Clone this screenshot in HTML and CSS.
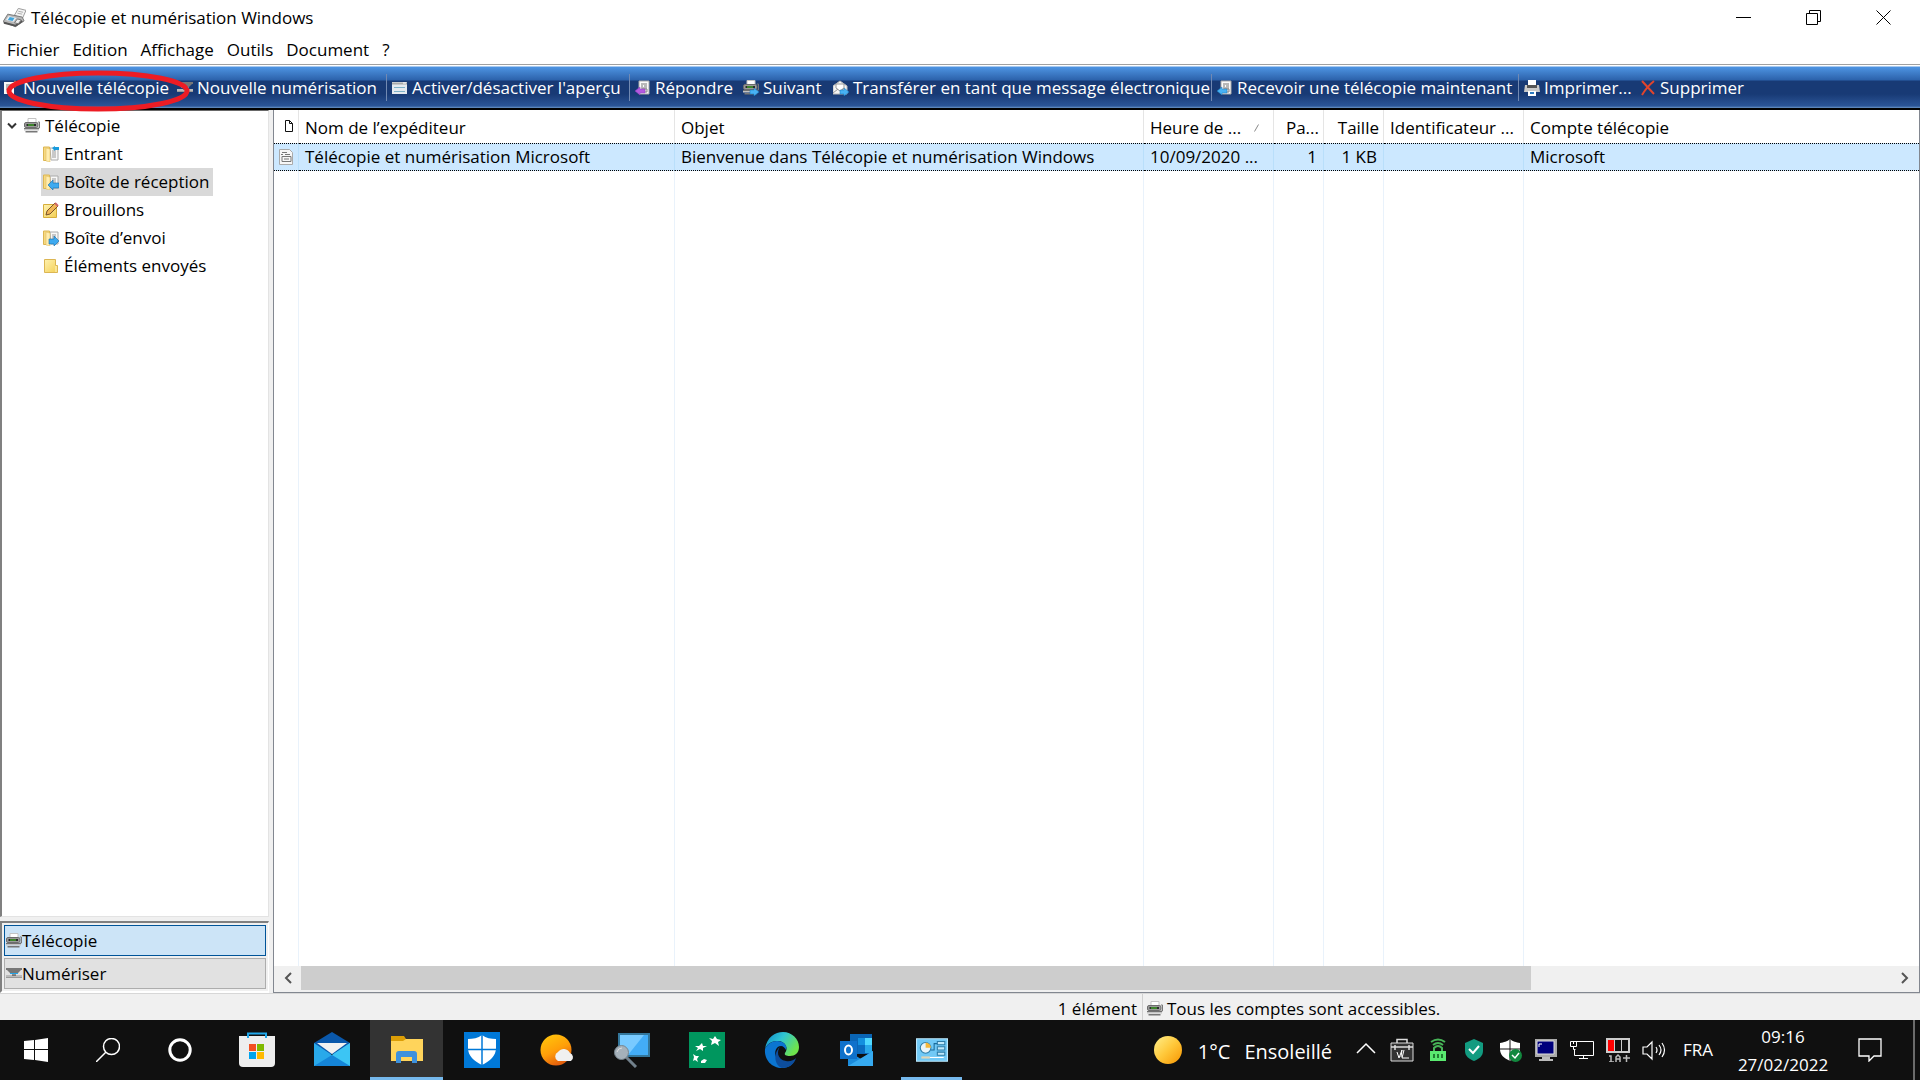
FILE: index.html
```html
<!DOCTYPE html>
<html lang="fr">
<head>
<meta charset="utf-8">
<title>Télécopie et numérisation Windows</title>
<link rel="stylesheet" href="styles.css">
</head>
<body>
<svg class="defs" aria-hidden="true">
  <defs>
    <linearGradient id="folderFill" x1="0" y1="0" x2="1" y2="1"><stop offset="0" stop-color="#fff2b0"/><stop offset="1" stop-color="#f3cf55"/></linearGradient>
    <linearGradient id="sunFill" x1="0" y1="0" x2="1" y2="1"><stop offset="0" stop-color="#fff08c"/><stop offset=".5" stop-color="#ffc83a"/><stop offset="1" stop-color="#f79400"/></linearGradient>
    <symbol id="fax" viewBox="0 0 16 16">
      <path d="M4 .5h8v5H4z" fill="#fff" stroke="#c4c4c4"/>
      <path d="M14 4h1.500v6H14" fill="none" stroke="#777"/>
      <rect x=".5" y="4.500" width="13.500" height="5" rx="1.500" fill="#9a9a9a" stroke="#6c6c6c"/>
      <path d="M2.500 7h9.500" stroke="#2c2c2c" stroke-width="2"/><path d="M4 7h6" stroke="#4ede2c"/>
      <path d="M0 10h15v2.500H0z" fill="#c3c3c3"/><path d="M0 10.500h15" stroke="#707070"/>
      <path d="M1.500 13h12v1.500H1.500z" fill="#777"/>
    </symbol>
    <symbol id="scanner" viewBox="0 0 16 16">
      <path d="M0 3h16" stroke="#777" stroke-width="2"/><path d="M1 4h14l-3 3H4z" fill="#777"/>
      <path d="M4 7.500h8" stroke="#24a5e8"/><path d="M0 9h16v3H0z" fill="#999"/><path d="M0 10h16" stroke="#ddd"/><path d="M6 9h4" stroke="#333"/>
    </symbol>
    <symbol id="folder" viewBox="0 0 16 16">
      <path d="M7 2h8v12H8z" fill="#f8f8f8" stroke="#aaa"/><path d="M9 5h4M9 7h4M9 9h4M9 11h4" stroke="#999"/>
      <path d="M.5 1h6v13.500h-6z" fill="#f6d983" stroke="#dcb653"/><path d="M3 2l4 1v13l-4-1z" fill="#ffedaf" stroke="#dcb653" stroke-width=".5"/>
    </symbol>
    <symbol id="page" viewBox="0 0 16 16">
      <path d="M4 1h10v13H4z" fill="#fafafa" stroke="#aaa"/><path d="M6 4h6M6 6h2M9 6h3M6 8h6" stroke="#777"/><path d="M7 9h5v3H7z" fill="#ddd" stroke="#888"/>
    </symbol>
    <symbol id="shield" viewBox="0 0 24 24"><path d="M12 1c3 3 6 3 10 4v6c0 6-4 9-10 12C6 20 2 17 2 11V5c4-1 7-1 10-4z"/></symbol>
  </defs>
</svg>

<div class="window">
  <header class="titlebar">
    <svg class="app-icon" viewBox="0 0 24 20"><path d="M12 7l4-7 8 2-4 9z" fill="#f4f4f4" stroke="#999"/><path d="M16 3l5 1M15 5l5 1" stroke="#aaa"/><path d="M0 14L5 6l15 3 2 4-9 6z" fill="#b9b9b9" stroke="#777"/><path d="M6 8l8 2-3 4-8-2z" fill="#e9eef2"/><path d="M7 9l5 1-2 3-5-1z" fill="#42a5dc"/><path d="M1 15l12 3 7-5" fill="none" stroke="#555" stroke-width="2"/><path d="M15 11l4 1-3 4-4-1z" fill="#eee" stroke="#777"/></svg>
    <h1 class="title">Télécopie et numérisation Windows</h1>
    <div class="caption-buttons">
      <button class="caption" aria-label="Réduire"><svg viewBox="0 0 16 16"><path d="M0 7.500h15" /></svg></button>
      <button class="caption" aria-label="Restaurer"><svg viewBox="0 0 16 16"><path d="M.5 3.500h11v11H.5zM3.500 3.500v-3h11v11h-3" /></svg></button>
      <button class="caption" aria-label="Fermer"><svg viewBox="0 0 16 16"><path d="M.5.5l14 14M14.500.5l-14 14" /></svg></button>
    </div>
  </header>

  <nav class="menubar" aria-label="Menu">
    <button>Fichier</button><button>Edition</button><button>Affichage</button><button>Outils</button><button>Document</button><button>?</button>
  </nav>

  <div class="toolbar" role="toolbar">
    <button><svg class="icon" viewBox="0 0 16 16"><path d="M1 2h10v12H1z" fill="#f8f8f8"/><path d="M3 5h5M3 7h5M3 9h2" stroke="#777"/><path d="M12 0l1 3 3 1-3 1-1 3-1-3-3-1 3-1z" fill="#ffc34a"/></svg>Nouvelle télécopie</button>
    <button><svg class="icon"><use href="#scanner"/></svg>Nouvelle numérisation</button>
    <button class="divided"><svg class="icon" viewBox="0 0 16 16"><path d="M0 2h15v12H0z" fill="#e4eaf0"/><path d="M0 3.500h15" stroke="#aaa" stroke-width="2"/><path d="M2 7.500h11M2 11.500h11" stroke="#7db1c8"/><path d="M11 3h3" stroke="#fff"/></svg>Activer/désactiver l'aperçu</button>
    <button class="divided"><svg class="icon" viewBox="0 0 16 16"><use href="#page"/><path d="M0 11l5-4v2h5v4H5v2z" fill="#b35adf" stroke="#8f3cc0" stroke-width=".5"/></svg>Répondre</button>
    <button><svg class="icon" viewBox="0 0 16 16"><use href="#fax"/><path d="M16 12l-5-4v2H7v4h4v2z" fill="#48b2f4" stroke="#1676b8" stroke-width=".5"/></svg>Suivant</button>
    <button><svg class="icon" viewBox="0 0 16 16"><path d="M0 6l7-5 7 5v8H0z" fill="#f4f4f4" stroke="#bbb"/><path d="M3 4h8v4l-4 3-4-3z" fill="#fff" stroke="#999"/><path d="M0 13l5-4M14 13L9 9" stroke="#999"/><path d="M16 12l-5-4v2H7v4h4v2z" fill="#48b2f4" stroke="#1676b8" stroke-width=".5"/></svg>Transférer en tant que message électronique</button>
    <button class="divided"><svg class="icon" viewBox="0 0 16 16"><use href="#page"/><path d="M0 11l5-4v2h5v4H5v2z" fill="#48b2f4" stroke="#1676b8" stroke-width=".5"/></svg>Recevoir une télécopie maintenant</button>
    <button class="divided"><svg class="icon" viewBox="0 0 16 16"><path d="M4 0h8v6H4z" fill="#fff"/><path d="M1 5h2v3h10V5h2l1 7H0z" fill="#c9c9c9"/><path d="M3 5h10v3H3z" fill="#555"/><path d="M4 11h8v5H4z" fill="#fff"/><path d="M6 13h4" stroke="#2d7abf" stroke-width="2"/></svg>Imprimer...</button>
    <button><svg class="icon" viewBox="0 0 16 16"><path d="M2 1l12 13M14 1C9 5 5 10 2 15" fill="none" stroke="#e0452d" stroke-width="2"/></svg>Supprimer</button>
    <svg class="annotation" viewBox="0 0 186 44" aria-hidden="true"><ellipse cx="93" cy="22" rx="89" ry="18" fill="none" stroke="#ed1c24" stroke-width="5"/></svg>
  </div>

  <main class="workspace">
    <aside class="sidebar">
      <div class="tree" role="tree">
        <a href="#telecopie" class="node root"><svg class="chevron" viewBox="0 0 10 8"><path d="M1 1.500l4 4 4-4" fill="none" stroke="#333" stroke-width="2"/></svg><svg class="icon"><use href="#fax"/></svg>Télécopie</a>
        <a href="#entrant" class="node"><svg class="icon" viewBox="0 0 16 16"><use href="#folder"/><path d="M9 2l3-2v1h4v3h-4v1z" fill="#199bdd"/></svg>Entrant</a>
        <a href="#reception" class="node selected"><svg class="icon" viewBox="0 0 16 16"><use href="#folder"/><path d="M5 11l5-5v3h6v5h-6v2z" fill="#3eaaf0" stroke="#146ca9" stroke-width=".6"/></svg>Boîte de réception</a>
        <a href="#brouillons" class="node"><svg class="icon" viewBox="0 0 16 16"><path d="M.5 2.500h13v13H.5z" fill="url(#folderFill)" stroke="#d6ae3b"/><path d="M3 13l1-4 8-8 3 3-8 8z" fill="#f1b654" stroke="#765128"/><path d="M12 1l3 3" stroke="#cb6667" stroke-width="2"/></svg>Brouillons</a>
        <a href="#envoi" class="node"><svg class="icon" viewBox="0 0 16 16"><use href="#folder"/><path d="M16 11l-5-5v3H6v5h5v2z" fill="#3eaaf0" stroke="#146ca9" stroke-width=".6"/></svg>Boîte d’envoi</a>
        <a href="#envoyes" class="node"><svg class="icon" viewBox="0 0 16 16"><path d="M1.500 1.500h11v6h2v7h-13z" fill="url(#folderFill)" stroke="#dcb653"/><path d="M13 8v6" stroke="#fff6c5"/></svg>Éléments envoyés</a>
      </div>
      <div class="modes">
        <button class="mode active"><svg class="icon"><use href="#fax"/></svg>Télécopie</button>
        <button class="mode"><svg class="icon"><use href="#scanner"/></svg>Numériser</button>
      </div>
    </aside>

    <section class="list">
      <table>
        <colgroup><col class="c-icon"><col class="c-name"><col class="c-subject"><col class="c-time"><col class="c-pages"><col class="c-size"><col class="c-id"><col></colgroup>
        <thead>
          <tr><th><svg class="doc" viewBox="0 0 10 13"><path d="M1.500.5h4l3 3v8h-7zM5.500.5v3h3" fill="none" stroke="#111"/></svg></th><th>Nom de l’expéditeur</th><th>Objet</th><th><span class="sorted">Heure de ...<svg class="sort" viewBox="0 0 5 8"><path d="M.5 7.500l4-7" stroke="#888"/></svg></span></th><th class="num">Pa...</th><th class="num">Taille</th><th>Identificateur ...</th><th>Compte télécopie</th></tr>
        </thead>
        <tbody>
          <tr class="selected"><td><svg class="icon" viewBox="0 0 16 16"><path d="M1.500.5h10l3 3v12h-13z" fill="#f7f7f7" stroke="#aaa"/><path d="M4 3.500h5M3 5.500h2M7 5.500h5M4 7.500h9v5H4zM6 10h5" fill="none" stroke="#777"/></svg></td><td>Télécopie et numérisation Microsoft</td><td>Bienvenue dans Télécopie et numérisation Windows</td><td>10/09/2020 ...</td><td class="num">1</td><td class="num">1 KB</td><td></td><td>Microsoft</td></tr>
          <tr class="filler"><td></td><td></td><td></td><td></td><td></td><td></td><td></td><td></td></tr>
        </tbody>
      </table>
      <div class="scrollbar">
        <button aria-label="Défiler à gauche"><svg viewBox="0 0 10 12"><path d="M8 1L3 6l5 5" /></svg></button>
        <div class="track"><div class="thumb"></div></div>
        <button aria-label="Défiler à droite"><svg viewBox="0 0 10 12"><path d="M2 1l5 5-5 5" /></svg></button>
      </div>
    </section>
  </main>

  <footer class="statusbar">
    <span class="count">1 élément</span>
    <span class="accounts"><svg class="icon"><use href="#fax"/></svg>Tous les comptes sont accessibles.</span>
  </footer>
</div>

<div class="taskbar">
  <div class="apps">
    <button aria-label="Démarrer"><svg width="24" height="24" viewBox="0 0 24 24" fill="#fff"><path d="M0 3l10-1v9H0zM11 2l13-2v11H11zM0 12h10v10L0 21zM11 12h13v12l-13-2z"/></svg></button>
    <button aria-label="Rechercher"><svg width="24" height="24" viewBox="0 0 24 24" fill="none" stroke="#fff" stroke-width="1.500"><circle cx="15.500" cy="8.500" r="8"/><path d="M10 14L0 24"/></svg></button>
    <button aria-label="Cortana"><svg width="24" height="24" viewBox="0 0 24 24" fill="none"><circle cx="12" cy="12" r="10.200" stroke="#fff" stroke-width="3"/></svg></button>
    <button class="wide" aria-label="Microsoft Store"><svg width="36" height="36" viewBox="0 0 36 36"><path d="M0 4h36v27q0 4-4 4H4q-4 0-4-4z" fill="#eee"/><path d="M9 6V1.500h18V6" fill="none" stroke="#20a7ea" stroke-width="2"/><path d="M10 12h7v7h-7z" fill="#f25022"/><path d="M18 12h7v7h-7z" fill="#7fba00"/><path d="M10 20h7v7h-7z" fill="#00a4ef"/><path d="M18 20h7v7h-7z" fill="#ffb900"/></svg></button>
    <button class="wide" aria-label="Courrier"><svg width="36" height="36" viewBox="0 0 36 36"><path d="M0 11L18 0l18 11v11H0z" fill="#0a58ab"/><path d="M0 11l18 12 18-12v23H0z" fill="#29a9ea"/><path d="M3 11h30L18 22z" fill="#f1f1f1"/><path d="M36 11L18 23l11 8 7 3z" fill="#3cc5f4"/><path d="M0 34l18-11 18 11z" fill="#1585d8"/></svg></button>
    <button class="wide open current" aria-label="Explorateur de fichiers"><svg width="32" height="28" viewBox="0 0 32 28"><path d="M0 0h13l2 3h17v8H0z" fill="#dc9e06"/><path d="M0 5h12l3-2h17v22H0z" fill="#ffd45b"/><path d="M5 27v-9q0-3 3-3h15q3 0 3 3v9h-5v-6H10v6z" fill="#3d91dd"/></svg></button>
    <button class="wide" aria-label="Sécurité Windows"><svg width="36" height="36" viewBox="0 0 36 36"><path d="M0 0h36v36H0z" fill="#0078d7"/><path d="M18 3c4 3 9 4 14 4v9c0 8-6 13-14 17C10 29 4 24 4 16V7c5 0 10-1 14-4z" fill="#fff"/><path d="M18 2v32M3 17.500h30" stroke="#0078d7" stroke-width="1.500"/></svg></button>
    <button class="wide" aria-label="Météo"><svg width="34" height="34" viewBox="0 0 34 34"><defs><linearGradient id="wx" x1="0" y1="0" x2=".5" y2="1"><stop offset="0" stop-color="#ffcb0c"/><stop offset=".6" stop-color="#ff9e09"/><stop offset="1" stop-color="#e4600d"/></linearGradient></defs><circle cx="16" cy="17" r="15.500" fill="url(#wx)"/><path d="M18 28a5 5 0 010-9 7 7 0 0112 1 4.500 4.500 0 011 8z" fill="#f0f0f0"/></svg></button>
    <button class="wide" aria-label="Recherche à distance"><svg width="36" height="36" viewBox="0 0 36 36"><path d="M4 1h32v24H4z" fill="#33779c"/><path d="M6 3h28v20H6z" fill="#43adf7"/><path d="M6 3h24L14 23H6z" fill="#78caff"/><path d="M12 25l10 10" stroke="#72818c" stroke-width="3"/><circle cx="7.500" cy="20.500" r="7" fill="#a5b1ba" stroke="#77858e"/><path d="M3 20q1-4 5-4" stroke="#ddd" fill="none"/></svg></button>
    <button class="wide" aria-label="BNP Paribas"><svg width="36" height="36" viewBox="0 0 36 36"><path d="M0 0h36v36H0z" fill="#00965e"/><g fill="#fff"><path d="M20 6l4 1 2-3 2 3 4 1-3 2 1 4-4-3-4 2 1-4z"/><path d="M6 14l4 0 3-3 1 3 4 0-4 2 0 3-3-2-4 2 2-3z"/><path d="M4 22l3 2 3 0-2 3 1 3-3-2-2 1 1-4z"/><path d="M12 29l3-2 3 1-2 3-4 0z"/></g></svg></button>
    <button class="wide" aria-label="Microsoft Edge"><svg width="36" height="36" viewBox="0 0 34 36"><defs><linearGradient id="edge" x1="0" y1="0" x2="1" y2=".5"><stop offset="0" stop-color="#0c86ca"/><stop offset=".5" stop-color="#30c6d2"/><stop offset="1" stop-color="#6ee34d"/></linearGradient></defs><path d="M0 17C2 5 10 0 18 0c9 0 16 7 16 15 0 6-4 9-9 9-4 0-6-1-5-3 4-5 0-12-7-12C6 9 2 12 0 17z" fill="url(#edge)"/><path d="M0 17C2 12 7 9 12 9c7 0 11 5 9 9-1-2-3-4-5-4-5 0-7 6-5 11 3 8 12 9 19 3-3 6-8 8-13 8C7 36-1 28 0 17z" fill="#0b75d0"/><path d="M16 14c-5 4-4 14 5 15 4 1 8-1 10-3-2 7-8 10-14 10C10 34 7 21 16 14z" fill="#0d4d9c"/></svg></button>
    <button class="wide" aria-label="Outlook"><svg width="36" height="34" viewBox="0 0 34 34"><path d="M10 1h22v20H10z" fill="#0a65b5"/><path d="M18 5h7v7h-7z" fill="#1390df"/><path d="M25 5h7v8h-7z" fill="#50d9ff"/><path d="M18 12h7v8h-7z" fill="#0a6cc0"/><path d="M25 12h7v8h-7z" fill="#28a8ea"/><path d="M8 18l13 8 12-8v15H8z" fill="#1a8bdc"/><path d="M8 33l25-15v15z" fill="#36aaf0"/><path d="M0 8h17v18H0z" fill="#0f71cb"/><ellipse cx="8.500" cy="17" rx="3.500" ry="4.500" fill="none" stroke="#fff" stroke-width="2"/></svg></button>
    <button class="wide open" aria-label="Télécopie et numérisation"><svg width="32" height="24" viewBox="0 0 30 22"><path d="M.5.5h29v21H.5z" fill="#71c9f6" stroke="#bce7fc"/><circle cx="9" cy="9" r="5" fill="#e9f5fa" stroke="#2d7ca8"/><path d="M9 9V4a5 5 0 015 5z" fill="#f5b73a"/><path d="M14 11h3V5h3" fill="none" stroke="#196b9c"/><path d="M20 3h7v3h-7zM20 8h7v3h-7zM20 13h7v3h-7z" fill="#bfe8fb" stroke="#2d7ca8"/><path d="M5 18h8" stroke="#e2d6b5" stroke-width="2"/><path d="M13 18h13" stroke="#fff"/></svg></button>
  </div>
  <div class="tray">
    <button class="weather"><svg width="28" height="28" viewBox="0 0 28 28"><circle cx="14" cy="14" r="14" fill="url(#sunFill)"/></svg><span>1°C</span><span>Ensoleillé</span></button>
    <div class="tray-icons">
      <svg viewBox="0 0 24 24" fill="none" stroke="#fff" stroke-width="1.500"><path d="M3 15l9-9 9 9"/></svg>
      <svg viewBox="0 0 24 24"><path d="M1 5h22v18H1z" fill="#333" stroke="#ddd"/><path d="M7 5V1.500h10V5M1 9h22M5 7v5M19 7v5" fill="none" stroke="#ddd" stroke-width="1.500"/><path d="M7 14l2 6 3-8-1 7M14 12l-2 8h7" fill="none" stroke="#fff"/></svg>
      <svg viewBox="0 0 24 24"><path d="M4 13h16v10H4z" fill="#5aea70"/><path d="M8 13v-3q4-4 8 0v3M7 7q5-4 10 0M5 4q7-5 14 0" fill="none" stroke="#47b457" stroke-width="2"/><path d="M8 16v4M16 16v4M12 16v4" stroke="#217f31" stroke-width="2"/></svg>
      <svg viewBox="0 0 24 24"><path d="M12 1l9 4v8c0 5-4 8-9 10-5-2-9-5-9-10V5z" fill="#129b80"/><path d="M7 11l4 4 6-7" fill="none" stroke="#fff" stroke-width="2"/></svg>
      <svg viewBox="0 0 24 24"><use href="#shield" fill="#fff"/><path d="M12 0v24M0 11h24" stroke="#101010"/><circle cx="17.500" cy="17.500" r="6.500" fill="#12883e"/><path d="M14 17l3 3 4-5" fill="none" stroke="#fff" stroke-width="1.500"/></svg>
      <svg viewBox="0 0 24 24"><path d="M1 1h22v18H1z" fill="#aaa"/><path d="M3 3h17v13H3z" fill="#00007c" stroke="#ddd"/><path d="M5 6v3M5 6h3" stroke="#fff"/><path d="M8 19h8v2h3v2H5v-2h3z" fill="#bbb"/></svg>
      <svg viewBox="0 0 24 24" fill="none" stroke="#fff"><path d="M6 3.500h17.500v14H4.500v-6M13.500 17.500v3M9 20.500h9M.5 3.500h6v5h-6zM3.500 8.500v3h2M3.500 3v3"/></svg>
      <svg viewBox="0 0 24 24"><path d="M1 1h22v13H1z" fill="none" stroke="#ccc" stroke-width="2"/><path d="M2 2h6v11H2z" fill="#f00"/><path d="M8.500 1v13M15.500 1v13" stroke="#ccc"/><path d="M3 18h2v6M3 24h5M10 24v-5l2-2 2 2v5M10 21h4M17 20h7M20.500 17v7" fill="none" stroke="#bbb" stroke-width="1.500"/></svg>
      <svg viewBox="0 0 24 24" fill="none" stroke="#fff" stroke-width="1.200"><path d="M1 9h4l5-5v17l-5-5H1zM14 9q2 3 0 6M17 7q4 5 0 10M20 5q5 7 0 14"/></svg>
    </div>
    <button class="lang">FRA</button>
    <button class="clock"><time>09:16</time><time>27/02/2022</time></button>
    <button class="notifications" aria-label="Notifications"><svg width="24" height="24" viewBox="0 0 24 24" fill="none" stroke="#fff" stroke-width="1.300"><path d="M1 1h22v17h-7l-5 5v-5H1z"/></svg></button>
    <button class="show-desktop" aria-label="Afficher le bureau"></button>
  </div>
</div>
</body>
</html>
```
FILE: styles.css
```css
* { box-sizing: border-box; }

body {
  margin: 0;
  min-height: 100vh;
  display: flex;
  flex-direction: column;
  background: #f0f0f0;
  color: #000;
  font: 17px/24px "Open Sans", "Noto Sans", sans-serif;
}

button {
  margin: 0;
  padding: 0;
  border: 0;
  background: none;
  color: inherit;
  font: inherit;
  white-space: nowrap;
}

a { color: inherit; text-decoration: none; }
svg { display: block; flex: none; }
.defs { position: absolute; width: 0; height: 0; }
.icon { width: 16px; height: 16px; }

.window { flex: 1; display: flex; flex-direction: column; }

/* Title bar and menu */
.titlebar { display: flex; align-items: center; height: 35px; padding-left: 3px; background: #fff; }
.app-icon { width: 23px; height: 20px; margin-right: 5px; }
.title { flex: 1; margin: 0; font-size: 17px; font-weight: 400; }
.caption-buttons { display: flex; padding-right: 1px; }
.caption { width: 70px; height: 34px; display: flex; align-items: center; justify-content: center; }
.caption svg { width: 16px; height: 16px; fill: none; stroke: #000; }

.menubar { display: flex; gap: 13px; height: 29px; padding: 3px 7px 0; background: #fff; }
.menubar button { height: 24px; }

/* Toolbar */
.toolbar {
  position: relative;
  display: grid;
  grid-template-columns: 174px 209px 243px 114px 90px 378px 307px 122px 1fr;
  align-items: center;
  height: 46px;
  padding: 2px 0 0 3px;
  border-top: 1px solid #a0a0a0;
  border-bottom: 2px solid #000;
  background: linear-gradient(#fff 0 1px, #4e94e2 2px, #2c62ab 15px, #183a75 16px 29px, #2b5597 41px, #6b95c4 43px);
  color: #fff;
}
.toolbar button { display: flex; align-items: center; gap: 4px; height: 27px; }
.toolbar .divided { padding-left: 5px; border-left: 1px solid #7189b2; }
.annotation { position: absolute; left: 5px; top: 4px; width: 186px; height: 44px; }

/* Workspace */
.workspace { flex: 1; display: flex; gap: 4px; }
.sidebar { width: 269px; display: flex; flex-direction: column; gap: 4px; }
.tree {
  flex: 1;
  padding-top: 1px;
  border: 1px solid #e3e3e3;
  border-top-color: #696969;
  border-left: 2px solid #808080;
  background: #fff;
}
.node { display: flex; align-items: center; gap: 5px; width: max-content; height: 28px; margin-left: 39px; padding: 0 4px 0 2px; }
.node.root { margin-left: 3px; }
.node.selected { background: #d9d9d9; }
.chevron { width: 10px; height: 8px; margin-right: 2px; }

.modes {
  display: flex;
  flex-direction: column;
  gap: 2px;
  padding: 2px;
  border: 2px solid #808080;
  border-right-width: 1px;
  border-right-color: #fff;
  border-bottom-color: #fff;
}
.mode { display: flex; align-items: center; height: 31px; padding: 1px 0 0 1px; border: 1px solid #adadad; background: #e1e1e1; }
.mode.active { border-color: #005499; background: #cce4f7; }

/* Fax list */
.list { flex: 1; display: flex; flex-direction: column; border: 1px solid #828790; border-top: 0; background: #fff; }
.list table { width: 100%; table-layout: fixed; border-collapse: separate; border-spacing: 0; height: calc(100vh - 224px); }
.c-icon { width: 25px; }
.c-name { width: 376px; }
.c-subject { width: 469px; }
.c-time { width: 130px; }
.c-pages { width: 50px; }
.c-size { width: 60px; }
.c-id { width: 140px; }
th, td { padding: 0 6px; border-right: 1px solid #e9f2fb; text-align: left; font-weight: 400; white-space: nowrap; overflow: hidden; }
th { height: 33px; padding-top: 2px; border-color: #e5e5e5; }
th:first-child, td:first-child { padding: 0 0 0 4px; }
th:last-child, td:last-child { border-right: 0; }
.num { text-align: right; }
th.num { padding-right: 4px; }
.selected td { height: 28px; border-top: 1px dotted #000; border-bottom: 1px dotted #000; background: #cce8ff; border-right-color: #b9dffb; }
.doc { width: 10px; height: 13px; margin-left: 6px; }
.sorted { display: flex; align-items: center; justify-content: space-between; padding-right: 8px; }
.sort { width: 5px; height: 8px; }

.scrollbar { display: flex; height: 26px; padding: 0 1px 2px; background: #f0f0f0; }
.scrollbar button { width: 26px; display: flex; align-items: center; justify-content: center; }
.scrollbar svg { width: 10px; height: 12px; fill: none; stroke: #555; stroke-width: 2; }
.track { flex: 1; }
.thumb { width: 77.3%; height: 100%; background: #cdcdcd; }

.statusbar { display: grid; grid-template-columns: 1143px 1fr; height: 27px; border-top: 1px solid #d7d7d7; }
.count { padding-right: 5px; border-right: 1px solid #d0d0d0; text-align: right; line-height: 30px; }
.accounts { display: flex; align-items: center; gap: 4px; padding: 0 0 0 4px; }

/* Taskbar */
.taskbar { display: flex; justify-content: space-between; height: 60px; background: #101010; color: #fff; }
.taskbar button { display: flex; align-items: center; justify-content: center; }
.apps { display: flex; }
.apps button { width: 72px; border-bottom: 3px solid transparent; border-top: 3px solid transparent; }
.apps .wide { width: 75px; }
.apps button:nth-child(4) { margin-left: 3px; }
.apps .open { width: 61px; margin: 0 7px; border-bottom-color: #76b9ed; }
.apps .current { width: 73px; margin: 0 1px; background: #333; border-top-color: #333; }

.tray { display: flex; align-items: stretch; }
.weather { gap: 14px; font-size: 20px; }
.weather svg { margin-right: 2px; }
.weather span { padding-top: 4px; }
.tray-icons { display: flex; align-items: center; gap: 12px; margin: 0 15px 0 22px; }
.tray-icons svg { width: 24px; height: 24px; }
.lang { width: 34px; }
.taskbar .clock { flex-direction: column; gap: 4px; width: 136px; padding-top: 1px; }
.notifications { width: 38px; }
.taskbar .show-desktop { width: 7px; margin-left: 24px; border-left: 2px solid #6b6b6b; }
```
